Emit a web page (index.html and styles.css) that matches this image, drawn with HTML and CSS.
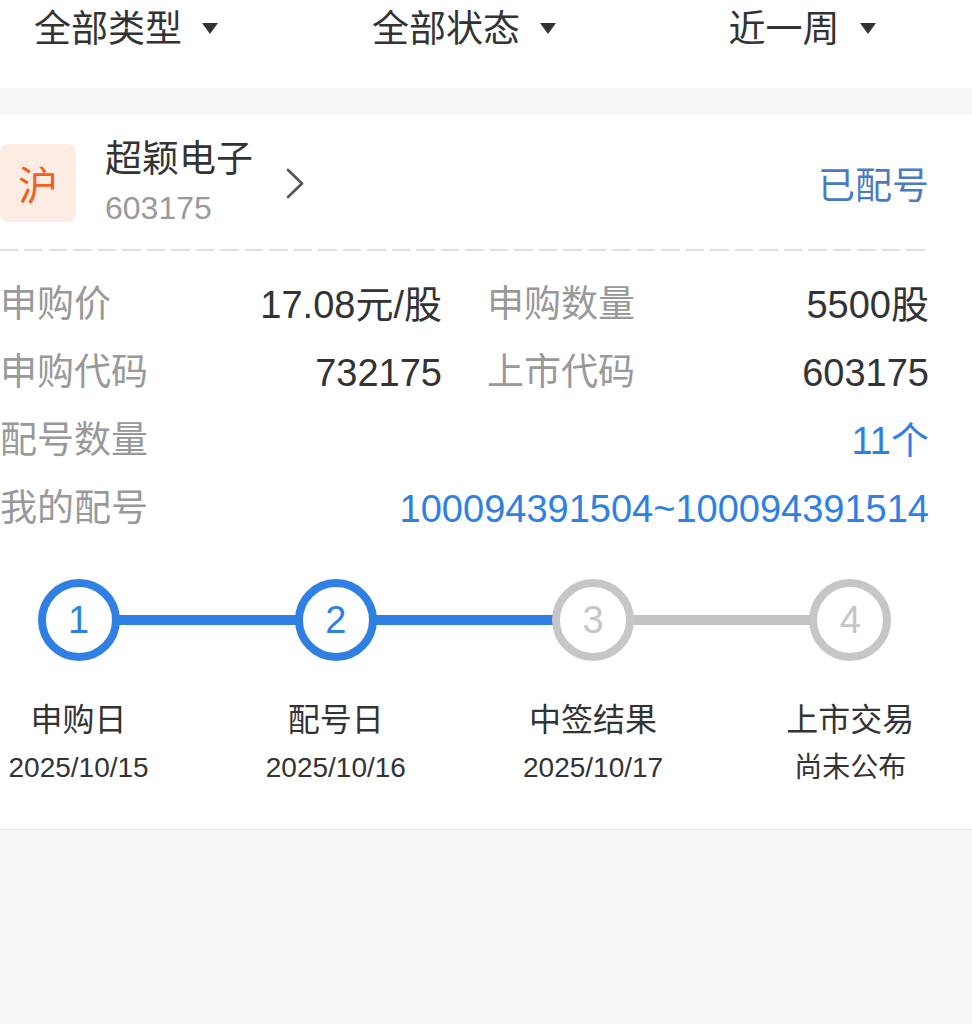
FILE: index.html
```html
<!DOCTYPE html>
<html lang="zh-CN">
<head>
<meta charset="utf-8">
<title>新股配号</title>
<link rel="stylesheet" href="styles.css">
</head>
<body>
<div class="page">
  <div class="tabs">
    <div class="tab"><span>全部类型</span><i class="caret"></i></div>
    <div class="tab"><span>全部状态</span><i class="caret"></i></div>
    <div class="tab"><span>近一周</span><i class="caret"></i></div>
  </div>
  <div class="card">
    <div class="head">
      <div class="badge">沪</div>
      <div class="name-block">
        <div class="name">超颖电子</div>
        <div class="code">603175</div>
      </div>
      <svg class="chev" width="19" height="31" viewBox="0 0 19 31"><path d="M2 2 L16 15.5 L2 29" fill="none" stroke="#555" stroke-width="2.6" stroke-linecap="round" stroke-linejoin="round"/></svg>
      <div class="status">已配号</div>
    </div>
    <div class="dash"></div>
    <div class="rows">
      <div class="row two">
        <div class="cell"><span class="label">申购价</span><span class="val">17.08元/股</span></div>
        <div class="cell"><span class="label">申购数量</span><span class="val">5500股</span></div>
      </div>
      <div class="row two">
        <div class="cell"><span class="label">申购代码</span><span class="val">732175</span></div>
        <div class="cell"><span class="label">上市代码</span><span class="val">603175</span></div>
      </div>
      <div class="row">
        <div class="cell"><span class="label">配号数量</span><span class="val blue">11个</span></div>
      </div>
      <div class="row">
        <div class="cell"><span class="label">我的配号</span><span class="val blue">100094391504~100094391514</span></div>
      </div>
    </div>
    <div class="steps">
      <div class="step done line-blue">
        <div class="circle">1</div>
        <div class="s-label">申购日</div>
        <div class="s-date">2025/10/15</div>
      </div>
      <div class="step done line-blue">
        <div class="circle">2</div>
        <div class="s-label">配号日</div>
        <div class="s-date">2025/10/16</div>
      </div>
      <div class="step line-gray">
        <div class="circle">3</div>
        <div class="s-label">中签结果</div>
        <div class="s-date">2025/10/17</div>
      </div>
      <div class="step">
        <div class="circle">4</div>
        <div class="s-label">上市交易</div>
        <div class="s-date">尚未公布</div>
      </div>
    </div>
  </div>
</div>
</body>
</html>
```
FILE: styles.css
```css
html, body {
  margin: 0;
  padding: 0;
}
body {
  background: #f6f7f9;
  min-height: 1024px;
  overflow: hidden;
  font-family: "Liberation Sans", "Noto Sans CJK SC", sans-serif;
  color: #333;
}
.page {
  margin-left: -43px;
  width: 1015px;
}
.tabs {
  background: #fff;
  height: 88px;
  display: grid;
  grid-template-columns: 338px 338px 338px;
  margin-bottom: 27px;
}
.tab {
  display: flex;
  justify-content: center;
  align-items: center;
  height: 60px;
  gap: 20px;
  font-size: 37px;
  color: #333;
}
.tab span {
  line-height: 60px;
}
.caret {
  width: 0;
  height: 0;
  border-left: 8px solid transparent;
  border-right: 8px solid transparent;
  border-top: 11px solid #333;
  margin-top: -4px;
}
.card {
  background: #fff;
  padding: 25px 43px 41px;
  border-bottom: 1px solid #e6e7ea;
}
.head {
  display: flex;
  align-items: center;
}
.badge {
  width: 76px;
  height: 78px;
  border-radius: 8px;
  background: #fcece4;
  color: #f0601c;
  font-size: 40px;
  display: flex;
  align-items: center;
  justify-content: center;
}
.name-block {
  margin-left: 29px;
}
.name {
  font-size: 37px;
  line-height: 40px;
  color: #333;
}
.code {
  font-size: 32px;
  line-height: 36px;
  margin-top: 10px;
  color: #9a9a9a;
}
.chev {
  margin-left: 33px;
}
.status {
  margin-left: auto;
  font-size: 37px;
  color: #4a7bc1;
}
.dash {
  margin-top: 23px;
  height: 2px;
  width: 926px;
  background: repeating-linear-gradient(90deg, #e0e0e0 0 18px, transparent 18px 24.5px);
}
.rows {
  margin-top: 20px;
}
.row {
  height: 68px;
  line-height: 68px;
  font-size: 37px;
}
.row.two {
  display: grid;
  grid-template-columns: 1fr 1fr;
  column-gap: 45px;
}
.cell {
  display: flex;
  justify-content: space-between;
}
.label {
  color: #999;
}
.val {
  color: #333;
  font-size: 38px;
}
.val.blue {
  color: #2f80e4;
}
.steps {
  margin: 36px -50px 0;
  display: flex;
}
.step {
  flex: 1;
  position: relative;
  display: flex;
  flex-direction: column;
  align-items: center;
}
.step.line-blue::after,
.step.line-gray::after {
  content: "";
  position: absolute;
  top: 36px;
  left: 50%;
  width: 100%;
  height: 10px;
  background: #c4c4c4;
}
.step.line-blue::after {
  background: #3080e4;
}
.circle {
  position: relative;
  z-index: 1;
  width: 66px;
  height: 66px;
  border: 8px solid #c6c6c6;
  border-radius: 50%;
  background: #fff;
  color: #c6c6c6;
  font-size: 38px;
  display: flex;
  align-items: center;
  justify-content: center;
}
.step.done .circle {
  border-color: #3080e4;
  color: #3080e4;
}
.s-label {
  margin-top: 39px;
  font-size: 32px;
  line-height: 40px;
  color: #333;
}
.s-date {
  margin-top: 8px;
  font-size: 28px;
  line-height: 40px;
  color: #333;
}
```
